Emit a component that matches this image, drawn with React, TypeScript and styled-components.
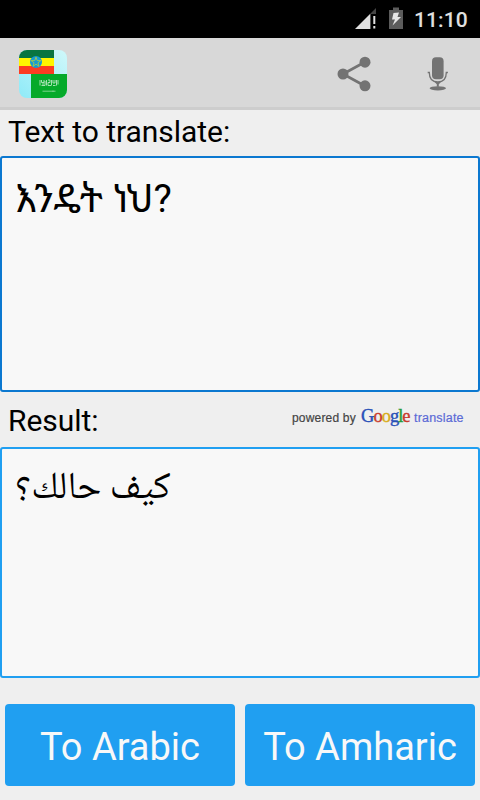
import React from "react";
import styled, { createGlobalStyle } from "styled-components";

const GlobalStyle = createGlobalStyle`
  * { box-sizing: border-box; }
  html, body { margin: 0; padding: 0; background: #efefef; }
  body { font-family: Roboto, "Noto Sans", sans-serif; color: #000; overflow: hidden; }
`;

const Screen = styled.div`
  width: 480px;
  height: 800px;
  display: flex;
  flex-direction: column;
  background: #efefef;
`;

const StatusBar = styled.header`
  height: 38px;
  flex: none;
  display: flex;
  justify-content: flex-end;
  align-items: flex-start;
  padding-right: 12px;
  background: #000;
`;

const SignalIcon = styled.svg`
  margin: 8px 12px 0 0;
`;

const BatteryIcon = styled.svg`
  margin: 7px 10px 0 0;
`;

const Clock = styled.span`
  width: 55px;
  font-size: 21px;
  line-height: 25px;
  padding: 8px 0 0 1px;
  font-weight: 500;
  letter-spacing: 0.1px;
  color: #e0e0e0;
  white-space: nowrap;
`;

const ActionBar = styled.nav`
  height: 72px;
  flex: none;
  display: flex;
  align-items: flex-start;
  padding: 12px 32px 0 19px;
  background: #d8d8d8;
  border-bottom: 3px solid #cdcdcd;
`;

const AppIcon = styled.svg`
  margin-right: auto;
`;

const ActionIcon = styled.svg<{ $gap?: number }>`
  margin: 0 ${(p) => p.$gap ?? 0}px 0 0;
`;

const LabelRow = styled.div<{ $height: number; $top: number }>`
  height: ${(p) => p.$height}px;
  flex: none;
  display: flex;
  justify-content: space-between;
  padding: ${(p) => p.$top}px 15px 0 8px;
`;

const Label = styled.label`
  font-size: 30px;
  line-height: 36px;
  letter-spacing: -0.04px;
  white-space: nowrap;
`;

const TextPanel = styled.section<{ $height: number; $border: string }>`
  height: ${(p) => p.$height}px;
  flex: none;
  padding: 17px 13px;
  background: #f8f8f8;
  border: 2px solid ${(p) => p.$border};
  border-radius: 3px;
`;

const Phrase = styled.p<{ $size: number; $family: string }>`
  margin: 0;
  font-family: ${(p) => p.$family};
  font-size: ${(p) => p.$size}px;
  line-height: 47px;
  white-space: nowrap;
  text-align: left;
`;

const Attribution = styled.div`
  width: 173px;
  height: 24px;
  margin-top: 1px;
  display: flex;
  align-items: baseline;
  white-space: nowrap;
  line-height: 24px;
`;

const PoweredBy = styled.span`
  width: 69px;
  font-family: "Liberation Sans", Arial, sans-serif;
  font-size: 12px;
  letter-spacing: 0.18px;
  color: #444;
  -webkit-text-stroke: 0.2px #444;
`;

const Wordmark = styled.span`
  width: 53px;
  display: flex;
  align-items: baseline;
  font-family: "Liberation Serif", "Times New Roman", serif;
  font-size: 18.5px;
  letter-spacing: -1px;
`;

const Letter = styled.span<{ $color: string }>`
  color: ${(p) => p.$color};
  -webkit-text-stroke: 0.4px ${(p) => p.$color};
`;

const Product = styled.span`
  font-family: "Liberation Sans", Arial, sans-serif;
  font-size: 12.5px;
  letter-spacing: 0.2px;
  color: #5b6ad6;
  -webkit-text-stroke: 0.2px #5b6ad6;
`;

const ButtonRow = styled.footer`
  margin-top: 26px;
  padding: 0 5px;
  display: grid;
  grid-template-columns: 1fr 1fr;
  gap: 10px;
`;

const TranslateButton = styled.button`
  height: 82px;
  padding: 4px 0 0;
  border: 0;
  border-radius: 4px;
  background: #209ff1;
  color: #f8f8f8;
  font: 38px/46px Roboto, sans-serif;
  white-space: nowrap;
`;

const wordmark = [
  ["G", "#2850b8"],
  ["o", "#c83a2c"],
  ["o", "#d8ac18"],
  ["g", "#2850b8"],
  ["l", "#239b38"],
  ["e", "#c83a2c"],
];

export default function App() {
  return (
    <Screen>
      <GlobalStyle />
      <StatusBar>
        <SignalIcon width="22" height="22" viewBox="0 0 22 22">
          <path d="M21 0v6h-6z" fill="#454545" />
          <path d="M0 21 15 6v15z" fill="#e0e0e0" />
          <path d="M15 6h1v15h-1z" fill="#555" />
          <path d="M18.300 8h2v8h-2zM18.300 18h2v2.500h-2z" fill="#e0e0e0" />
        </SignalIcon>
        <BatteryIcon width="14" height="22" viewBox="0 0 14 22">
          <path d="M0 3h4V0.500h6V3h4v19H0z" fill="#5c5c5c" />
          <path d="m4.500 6 5.500-.5-1.500 4.500H12L3.500 18.500l2.500-6H3z" fill="#e6e6e6" />
        </BatteryIcon>
        <Clock>11:10</Clock>
      </StatusBar>

      <ActionBar>
        <AppIcon width="48" height="48" viewBox="0 0 48 48">
          <defs>
            <clipPath id="rounded"><rect width="48" height="48" rx="8" /></clipPath>
            <linearGradient id="sky" x1="1" y1="0" x2="0" y2="1">
              <stop offset="0" stopColor="#d0f8fa" />
              <stop offset="1" stopColor="#8eeaf8" />
            </linearGradient>
          </defs>
          <g clipPath="url(#rounded)">
            <path d="M0 0h48v48H0z" fill="url(#sky)" />
            <path d="M0 0h35v8H0z" fill="#087540" />
            <path d="M0 8h35v8H0z" fill="#fff500" />
            <path d="M0 16h35v8H0z" fill="#fb3c22" />
            <circle cx="17" cy="12" r="6" fill="#159bd3" />
            <path d="m17 7 1.200 3.600h3.700l-3 2.200 1.100 3.600-3-2.200-3 2.200 1.100-3.600-3-2.200h3.700z" fill="none" stroke="#a5c94c" strokeWidth=".9" />
            <path d="M12 24h36v24H12z" fill="#05aa2a" />
            <path d="M21 30v5.500M22.500 30v2.500h2.500V30M22.500 35.500H26V31M24 33v2M27.500 30v5.500M29 30h2v2.500h-2v3h3M32.500 30v5.500M34 30v3h2v-3M34 35.500h2.500M37.500 30v5.500M39 30v4.500" fill="none" stroke="#b5e8be" strokeWidth=".9" />
            <path d="M23.500 41.200h13M34 40.600v1.400" stroke="#8bd898" strokeWidth=".9" />
          </g>
        </AppIcon>
        <ActionIcon width="36" height="48" viewBox="0 0 36 48" $gap={54}>
          <path d="M29 12 7 24l22 12" fill="none" stroke="#737373" strokeWidth="2.700" />
          <g fill="#737373">
            <circle cx="29" cy="12.200" r="5.500" />
            <circle cx="7" cy="24" r="5.500" />
            <circle cx="29" cy="35.800" r="5.500" />
          </g>
        </ActionIcon>
        <ActionIcon width="22" height="48" viewBox="0 0 22 48">
          <rect x="6" y="7.300" width="11.600" height="22" rx="4" fill="#737373" />
          <path d="M1.700 22.500h1.600c0 7 3 9.500 8.500 9.500s8.500-2.500 8.500-9.500h1.600" fill="none" stroke="#737373" strokeWidth="1.300" />
          <path d="M8.500 32h6.500l-2.200 2.200v2.500h-2v-2.500z" fill="#737373" />
          <ellipse cx="11.800" cy="38.300" rx="8.200" ry="2.100" fill="#737373" />
        </ActionIcon>
      </ActionBar>

      <LabelRow $height={46} $top={4}>
        <Label>Text to translate:</Label>
      </LabelRow>
      <TextPanel $height={236} $border="#0b78d0">
        <Phrase lang="am" $size={38.6} $family={'Roboto, "Noto Sans Ethiopic", "Noto Sans", sans-serif'}>እንዴት ነህ?</Phrase>
      </TextPanel>

      <LabelRow $height={55} $top={11}>
        <Label>Result:</Label>
        <Attribution>
          <PoweredBy>powered by</PoweredBy>
          <Wordmark>
            {wordmark.map(([char, color], i) => (
              <Letter key={i} $color={color}>{char}</Letter>
            ))}
          </Wordmark>
          <Product>translate</Product>
        </Attribution>
      </LabelRow>
      <TextPanel $height={231} $border="#209ff1">
        <Phrase lang="ar" dir="rtl" $size={38.2} $family={'"Noto Naskh Arabic", "Noto Sans Arabic", "DejaVu Sans", sans-serif'}>كيف حالك؟</Phrase>
      </TextPanel>

      <ButtonRow>
        <TranslateButton>To Arabic</TranslateButton>
        <TranslateButton>To Amharic</TranslateButton>
      </ButtonRow>
    </Screen>
  );
}
